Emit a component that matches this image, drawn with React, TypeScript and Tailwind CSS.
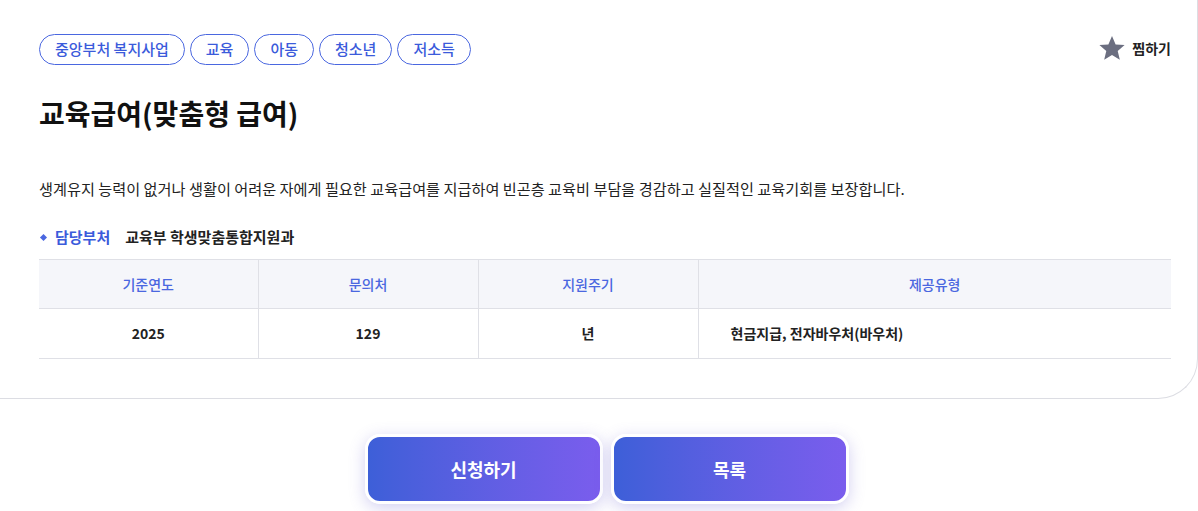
const tags = ["중앙부처 복지사업", "교육", "아동", "청소년", "저소득"];

const font = { fontFamily: '"Noto Sans CJK KR", "Noto Sans", sans-serif' };

export default function App() {
  return (
    <div className="min-h-[511px] w-[1198px] bg-white text-[#222]" style={font}>
      <section className="rounded-br-[40px] border-b border-r border-[#dcdde3] pt-[34px] pl-[39px] pr-[26px] pb-[39px]">
        <div className="flex items-start justify-between">
          <ul className="flex gap-[5px]">
            {tags.map((t) => (
              <li
                key={t}
                className="flex h-[31px] items-center rounded-full border border-[#4a67e0] px-[15px] text-[15px] font-medium text-[#3b5bdb]"
              >
                {t}
              </li>
            ))}
          </ul>
          <button className="flex items-center gap-[6px] text-[14px] font-bold text-[#222]">
            <svg width="28" height="28" viewBox="0 0 24 24" fill="#6b6e80">
              <path d="M12 1.8l3.1 7.1 7.7.6-5.9 5 1.8 7.5L12 18l-6.7 4 1.8-7.5-5.9-5 7.7-.6z" />
            </svg>
            찜하기
          </button>
        </div>

        <h1 className="mt-[26px] text-[28px] font-bold leading-[44px] text-[#111]">교육급여(맞춤형 급여)</h1>

        <p className="mt-[41px] text-[15.2px] leading-[24px] text-[#222]">
          생계유지 능력이 없거나 생활이 어려운 자에게 필요한 교육급여를 지급하여 빈곤층 교육비 부담을 경감하고 실질적인 교육기회를 보장합니다.
        </p>

        <div className="mt-[25px] flex items-center text-[15px] leading-[24px]">
          <span className="ml-[2px] mr-[9px] h-[5px] w-[5px] rotate-45 bg-[#4a67e0]" />
          <span className="font-bold text-[#3b5bdb]">담당부처</span>
          <span className="ml-[15px] font-bold text-[#222]">교육부 학생맞춤통합지원과</span>
        </div>

        <table className="mt-[10px] w-full border-collapse text-[14px]">
          <thead>
            <tr className="h-[49px] border-y border-[#dfe0e6] bg-[#f5f6fa] text-[#4a67e0]">
              <th className="w-[219px] border-r border-[#dfe0e6] font-medium">기준연도</th>
              <th className="w-[220px] border-r border-[#dfe0e6] font-medium">문의처</th>
              <th className="w-[220px] border-r border-[#dfe0e6] font-medium">지원주기</th>
              <th className="font-medium">제공유형</th>
            </tr>
          </thead>
          <tbody>
            <tr className="h-[50px] border-b border-[#dfe0e6] font-bold text-[#222]">
              <td className="border-r border-[#dfe0e6] text-center">2025</td>
              <td className="border-r border-[#dfe0e6] text-center">129</td>
              <td className="border-r border-[#dfe0e6] text-center">년</td>
              <td className="pl-[32px]">현금지급, 전자바우처(바우처)</td>
            </tr>
          </tbody>
        </table>
      </section>

      <div className="flex justify-center gap-[8px] pl-[15px] pt-[35px]">
        {["신청하기", "목록"].map((b) => (
          <button
            key={b}
            className="flex h-[70px] w-[238px] items-center justify-center rounded-[15px] border-[3px] border-white bg-gradient-to-r from-[#3d5fd8] to-[#7a5ded] text-[18px] font-bold text-white shadow-[0_4px_16px_rgba(110,100,210,0.3)]"
          >
            {b}
          </button>
        ))}
      </div>
    </div>
  );
}
